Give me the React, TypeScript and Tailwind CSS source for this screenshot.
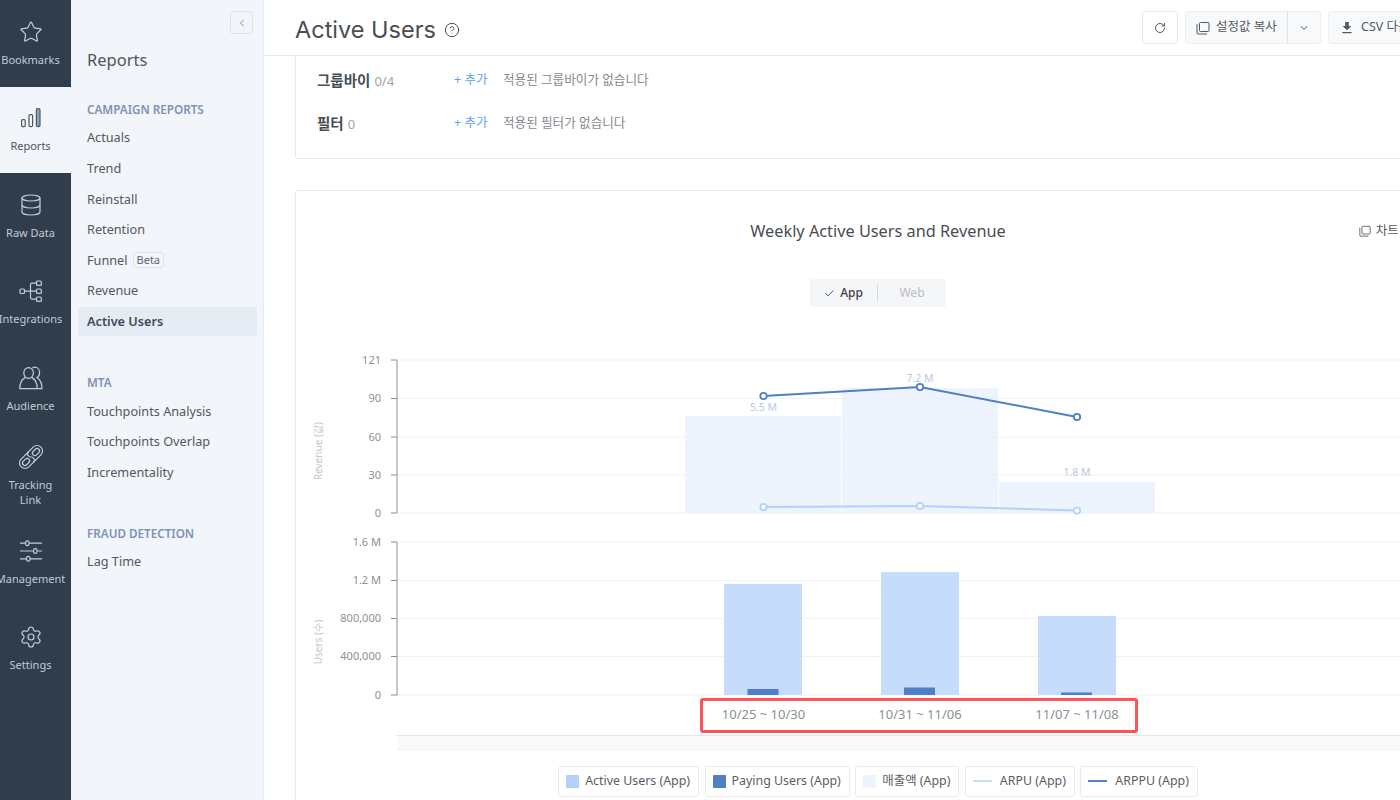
import React from "react";
import { Star, Database, Settings, RotateCw, ChevronDown, ChevronLeft, Check, CircleHelp } from "lucide-react";

const FONT = "font-['Noto_Sans','Noto_Sans_CJK_KR',sans-serif]";

const BarsIcon = () => (
  <svg width="24" height="24" viewBox="0 0 24 24" fill="none" strokeWidth="1.2">
    <rect x="2.6" y="13.6" width="3.6" height="7" rx="1" stroke="#4b5a6b" />
    <rect x="10" y="8.6" width="3.6" height="12" rx="1.2" stroke="#4b5a6b" />
    <rect x="17.4" y="2.6" width="3.6" height="18" rx="1.4" fill="#8ea3c4" stroke="#4b5a6b" />
  </svg>
);
const TreeIcon = () => (
  <svg width="24" height="24" viewBox="0 0 24 24" fill="none" stroke="#c6ced8" strokeWidth="1.2">
    <rect x="1" y="10" width="4.5" height="4.5" rx="1" />
    <rect x="17.5" y="2" width="4.8" height="4.4" rx="1" />
    <rect x="17.5" y="10" width="4.8" height="4.4" rx="1" />
    <rect x="17.5" y="18" width="4.8" height="4.4" rx="1" />
    <path d="M5.5 12.2H17.5M11.5 12.2V6c0-1 .6-1.8 1.6-1.8h4.4M11.5 12.2v6.2c0 1 .6 1.8 1.6 1.8h4.4" />
  </svg>
);
const PeopleIcon = () => (
  <svg width="24" height="24" viewBox="0 0 24 24" fill="none" stroke="#c6ced8" strokeWidth="1.2">
    <ellipse cx="9.6" cy="7" rx="4.8" ry="5.4" />
    <path d="M6.2 11.6C3 13.2.8 16 .8 22.6h17.4c0-6.6-2.2-9.4-5.2-11" />
    <path d="M13.4 2c.7-.5 1.6-.8 2.5-.8 2.7 0 4.7 2.5 4.7 5.6 0 2.2-1 4-2.6 4.9 3 1.6 4.9 4.4 4.9 10.9h-4.2" />
  </svg>
);
const LinkIcon = () => (
  <svg width="24" height="24" viewBox="0 0 24 24" fill="none" stroke="#c6ced8" strokeWidth="1.2" strokeLinecap="round" className="overflow-visible">
    <g transform="rotate(-45 12 12)">
      <path d="M13.5 6.5H3.5a5.5 5.5 0 0 0 0 11H10.5" />
      <rect x="1" y="9.6" width="8" height="4.8" rx="2.4" />
      <path d="M10.5 17.5H20.5a5.5 5.5 0 0 0 0-11H13.5" />
      <rect x="15" y="9.6" width="8" height="4.8" rx="2.4" />
      <path d="M13.5 6.5c-2 0-2.5 1.5-2.5 3 0 3 2 2 2 5 0 1.5-.8 3-2.5 3" />
    </g>
  </svg>
);
const SlidersIcon = () => (
  <svg width="24" height="24" viewBox="0 0 24 24" fill="none" stroke="#c6ced8" strokeWidth="1.2">
    <path d="M1 4.2h5.6M10 4.2h13M1 12h13.6M18 12h5M1 19.8h6.6M11 19.8h12" />
    <rect x="6.6" y="1.8" width="3.4" height="4.8" rx="1.7" />
    <rect x="14.6" y="9.6" width="3.4" height="4.8" rx="1.7" />
    <rect x="7.6" y="17.4" width="3.4" height="4.8" rx="1.7" />
  </svg>
);
const CopyIcon = ({ size = 14 }: { size?: number }) => (
  <svg width={size} height={size} viewBox="0 0 14 14" fill="none" stroke="currentColor" strokeWidth="1">
    <rect x="3.5" y="1.5" width="9.5" height="9" rx="1" />
    <path d="M1 3v9c0 .6.4 1 1 1h9" />
  </svg>
);
const DownloadIcon = () => (
  <svg width="12" height="13" viewBox="0 0 12 13" fill="currentColor">
    <path d="M4.2 1h3.6v4h2.6L6 9.3 1.6 5h2.6zM1.4 11h9.2v1.2H1.4z" />
  </svg>
);

const rail = [
  { label: ["Bookmarks"], icon: <Star size={24} strokeWidth={1.2} color="#c6ced8" /> },
  { label: ["Reports"], icon: <BarsIcon />, active: true },
  { label: ["Raw Data"], icon: <Database size={24} strokeWidth={1.2} color="#c6ced8" /> },
  { label: ["Integrations"], icon: <TreeIcon /> },
  { label: ["Audience"], icon: <PeopleIcon /> },
  { label: ["Tracking", "Link"], icon: <LinkIcon /> },
  { label: ["Management"], icon: <SlidersIcon /> },
  { label: ["Settings"], icon: <Settings size={24} strokeWidth={1.2} color="#c6ced8" /> },
];

const Rail = () => (
  <nav className="flex h-full w-[71px] flex-none flex-col overflow-hidden bg-[#2f3d4c]">
    {rail.map((r) => (
      <div
        key={r.label[0]}
        className={`flex h-[86.5px] flex-none flex-col items-center justify-center pr-[10px] text-[11px] leading-[15px] whitespace-nowrap ${
          r.active ? "bg-[#f2f5f9] text-[#4b5563]" : "text-[#c3cbd5]"
        }`}
      >
        <div className="mb-[8px] flex h-[24px] w-[24px] items-center justify-center">{r.icon}</div>
        {r.label.map((l) => (
          <span key={l}>{l}</span>
        ))}
      </div>
    ))}
  </nav>
);

const Item = ({ children, active }: { children: React.ReactNode; active?: boolean }) => (
  <div
    className={`mb-[1.6px] flex h-[29px] items-center rounded-[3px] pl-[9px] text-[12.7px] ${
      active ? "bg-[#e6ecf3] font-semibold text-[#3d4a5a]" : "text-[#525861]"
    }`}
  >
    {children}
  </div>
);
const Heading = ({ children, className = "" }: { children: React.ReactNode; className?: string }) => (
  <div className={`mb-[6.5px] h-[16px] pl-[9px] text-[11.7px] leading-[16px] font-semibold text-[#7b93b7] ${className}`}>
    {children}
  </div>
);

const SubNav = () => (
  <aside className="flex h-full w-[193px] flex-none flex-col border-r border-[#e8ebef] bg-[#f2f5f9] pt-[11px] pr-[6px] pl-[7px]">
    <button className="mr-[4px] flex h-[23px] w-[23px] items-center justify-center self-end rounded-[3px] border border-[#dfe3e8] text-[#8a929c]">
      <ChevronLeft size={12} />
    </button>
    <div className="mt-[14px] pl-[9px] text-[16.5px] leading-[24px] text-[#4f555c]">Reports</div>
    <Heading className="mt-[29px]">CAMPAIGN REPORTS</Heading>
    <Item>Actuals</Item>
    <Item>Trend</Item>
    <Item>Reinstall</Item>
    <Item>Retention</Item>
    <Item>
      Funnel
      <span className="ml-[5px] rounded-[3px] border border-[#dfe3e8] px-[3px] text-[11px] leading-[14px] text-[#5f666f]">
        Beta
      </span>
    </Item>
    <Item>Revenue</Item>
    <Item active>Active Users</Item>
    <Heading className="mt-[36.5px]">MTA</Heading>
    <Item>Touchpoints Analysis</Item>
    <Item>Touchpoints Overlap</Item>
    <Item>Incrementality</Item>
    <Heading className="mt-[36.5px]">FRAUD DETECTION</Heading>
    <Item>Lag Time</Item>
  </aside>
);

const Header = () => (
  <header className="flex h-[56px] flex-none items-center border-b border-[#e6e7ea] pl-[31px]">
    <div className="flex w-[847px] flex-none items-center gap-[8px] pt-[4px]">
      <h1 className="font-['Inter','Noto_Sans',sans-serif] text-[23.5px] leading-[30px] text-[#4a4d52]">Active Users</h1>
      <CircleHelp size={16} strokeWidth={1.5} color="#4a4d52" />
    </div>
    <div className="flex flex-none items-center text-[12.5px] text-[#55595f]">
      <button className="flex h-[33px] w-[36px] items-center justify-center rounded-[3px] border border-[#e6e7ea] bg-white">
        <RotateCw size={12} strokeWidth={2} />
      </button>
      <div className="ml-[7px] flex h-[33px] w-[136px] rounded-[3px] border border-[#eceef1] bg-[#f8f9fa]">
        <div className="flex w-[102px] items-center justify-center gap-[6px] border-r border-[#dfe1e4]">
          <CopyIcon />
          <span>설정값 복사</span>
        </div>
        <div className="flex flex-1 items-center justify-center">
          <ChevronDown size={12} />
        </div>
      </div>
      <div className="ml-[7px] flex h-[33px] w-[110px] items-center gap-[8px] rounded-[3px] border border-[#eceef1] bg-[#f8f9fa] pl-[12px] whitespace-nowrap">
        <DownloadIcon />
        <span>CSV 다운로드</span>
      </div>
    </div>
  </header>
);

const FilterRow = ({ label, count, desc }: { label: string; count: string; desc: string }) => (
  <div className="flex h-[43px] items-center">
    <div className="flex w-[137px] flex-none items-baseline gap-[4px]">
      <span className="text-[14.5px] font-semibold text-[#4a4d52]">{label}</span>
      <span className="text-[13px] text-[#a0a3a8]">{count}</span>
    </div>
    <span className="w-[49px] flex-none text-[12.5px] text-[#5ba4f5]">+ 추가</span>
    <span className="text-[12.6px] text-[#85888d]">{desc}</span>
  </div>
);

const Legend = ({ swatch, label, gap }: { swatch: React.ReactNode; label: string; gap: string }) => (
  <div className={`flex h-[31px] items-center rounded-[3px] border border-[#e9ebee] pr-[8px] pl-[7px] text-[12.4px] whitespace-nowrap text-[#5a5e64] ${gap}`}>
    {swatch}
    <span>{label}</span>
  </div>
);

const GRID_RIGHT = 1460;
const Axis = ({ ys, labels }: { ys: number[]; labels: string[] }) => (
  <g>
    {ys.map((y, i) => (
      <g key={y}>
        <line x1={397} x2={GRID_RIGHT} y1={y} y2={y} stroke="#f0f1f3" />
        <line x1={391} x2={397} y1={y} y2={y} stroke="#8b8e93" />
        <text x={381} y={y + 3.5} textAnchor="end" fontSize="11" fill="#8d9096">
          {labels[i]}
        </text>
      </g>
    ))}
    <line x1={397} x2={397} y1={ys[0]} y2={ys[ys.length - 1]} stroke="#8b8e93" />
  </g>
);

const Dot = ({ x, y, c }: { x: number; y: number; c: string }) => (
  <circle cx={x} cy={y} r={3.2} fill="#fff" stroke={c} strokeWidth={1.8} />
);

const Chart = () => (
  <div className="relative mt-[33px] h-[410px]">
    <svg width="1164" height="410" viewBox="296 340 1164 410">
      <Axis ys={[360, 398.5, 437, 475, 513]} labels={["121", "90", "60", "30", "0"]} />
      <Axis ys={[542, 580.5, 618.5, 656.5, 695]} labels={["1.6 M", "1.2 M", "800,000", "400,000", "0"]} />
      <text transform="translate(322 451) rotate(-90)" textAnchor="middle" fontSize="10" fill="#c4c7cc">Revenue (값)</text>
      <text transform="translate(322 642) rotate(-90)" textAnchor="middle" fontSize="10" fill="#c4c7cc">Users (수)</text>

      <g fill="#e6f0fc" fillOpacity="0.7">
        <rect x="685" y="416" width="156" height="97" />
        <rect x="842" y="388" width="156" height="125" />
        <rect x="999" y="482" width="156" height="31" />
      </g>
      <g fontSize="10.5" fill="#b9c8e4" textAnchor="middle">
        <text x="763.5" y="411">5.5 M</text>
        <text x="920" y="382">7.2 M</text>
        <text x="1077" y="476">1.8 M</text>
      </g>
      <polyline points="763.5,396 920,387 1077,417" fill="none" stroke="#4f7fc7" strokeWidth="2" />
      <polyline points="763.5,507 920,506 1077,510.5" fill="none" stroke="#b3d1fb" strokeWidth="2" />
      {[[763.5, 396], [920, 387], [1077, 417]].map(([x, y]) => <Dot key={x} x={x} y={y} c="#4f7fc7" />)}
      {[[763.5, 507], [920, 506], [1077, 510.5]].map(([x, y]) => <Dot key={x} x={x} y={y} c="#b3d1fb" />)}

      <g fill="#c6dcfb">
        <rect x="724" y="584" width="78" height="111" />
        <rect x="881" y="572" width="78" height="123" />
        <rect x="1038" y="616" width="78" height="79" />
      </g>
      <g fill="#4f7fc7">
        <rect x="747.5" y="689" width="31" height="6" />
        <rect x="904" y="687.5" width="31" height="7.5" />
        <rect x="1061" y="692.5" width="31" height="2.5" />
      </g>
      <g fontSize="13" fill="#8d9096" textAnchor="middle">
        <text x="763.5" y="718.5">10/25 ~ 10/30</text>
        <text x="920" y="718.5">10/31 ~ 11/06</text>
        <text x="1077" y="718.5">11/07 ~ 11/08</text>
      </g>
      <rect x="397" y="735.5" width="1063" height="15" fill="#f9f9f9" />
      <line x1="397" x2={GRID_RIGHT} y1="735.5" y2="735.5" stroke="#e6e6e6" />
      <line x1="397" x2={GRID_RIGHT} y1="750" y2="750" stroke="#e6e6e6" />
    </svg>
    <div className="absolute top-[358px] left-[404px] h-[35px] w-[438px] rounded-[3px] border-[3px] border-[#ff5257]" />
  </div>
);

const ChartCard = () => (
  <section className="mt-[31px] w-[1166px] rounded-[3px] border border-[#e6e7ea] bg-white pb-[40px]">
    <div className="mt-[28px] grid h-[24px] grid-cols-[1fr_auto_1fr] items-center">
      <div />
      <h2 className="text-[16.3px] text-[#4a4d52]">Weekly Active Users and Revenue</h2>
      <div className="flex items-center gap-[5px] justify-self-end pr-[35px] text-[12.5px] text-[#55595f]">
        <CopyIcon size={12} />
        <span>차트 복사</span>
      </div>
    </div>
    <div className="mx-auto mt-[36px] flex h-[28px] w-[136px] items-center rounded-[3px] bg-[#f5f6f8] text-[12px]">
      <div className="flex w-[68px] items-center justify-center gap-[5px] border-r border-[#d9dbde] font-medium text-[#3d4045]">
        <Check size={11} />
        <span>App</span>
      </div>
      <div className="flex w-[68px] justify-center text-[#b9bcc1]">Web</div>
    </div>
    <Chart />
    <div className="mt-[15.5px] flex justify-center gap-[5.5px]">
      <Legend gap="gap-[6px]" swatch={<span className="h-[13px] w-[13px] rounded-[1px] bg-[#b3d1fb]" />} label="Active Users (App)" />
      <Legend gap="gap-[6px]" swatch={<span className="h-[13px] w-[13px] rounded-[1px] bg-[#4f7fc7]" />} label="Paying Users (App)" />
      <Legend gap="gap-[6px]" swatch={<span className="h-[13px] w-[13px] rounded-[1px] bg-[#edf4fd]" />} label="매출액 (App)" />
      <Legend gap="gap-[8px]" swatch={<span className="h-[2px] w-[19px] bg-[#c6dcfb]" />} label="ARPU (App)" />
      <Legend gap="gap-[8px]" swatch={<span className="h-[2px] w-[19px] bg-[#4f7fc7]" />} label="ARPPU (App)" />
    </div>
  </section>
);

export default function App() {
  return (
    <div className={`flex h-[800px] w-[1400px] overflow-hidden bg-white ${FONT}`}>
      <Rail />
      <SubNav />
      <main className="flex min-w-0 flex-1 flex-col overflow-hidden">
        <Header />
        <div className="flex-1 overflow-hidden pl-[31px]">
          <section className="h-[103px] w-[1166px] rounded-b-[3px] border border-t-0 border-[#e6e7ea] pt-[3px] pl-[21px]">
            <FilterRow label="그룹바이" count="0/4" desc="적용된 그룹바이가 없습니다" />
            <FilterRow label="필터" count="0" desc="적용된 필터가 없습니다" />
          </section>
          <ChartCard />
        </div>
      </main>
    </div>
  );
}
